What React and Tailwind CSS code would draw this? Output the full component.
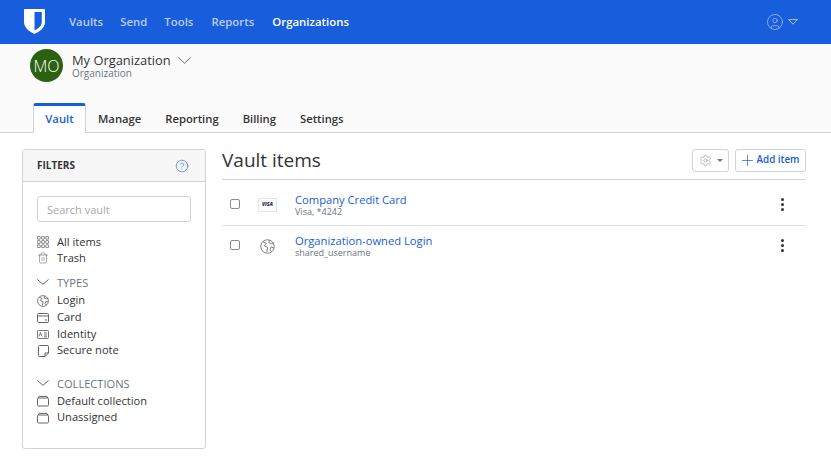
import { CircleHelp, Settings, Trash2, CircleUser } from 'lucide-react';

const Sans = '[font-family:"Open_Sans",sans-serif]';

const Chevron = ({ w = 12, h = 6 }) => (
  <svg width={w} height={h} viewBox={`0 0 ${w} ${h}`} fill="none" stroke="#555" strokeWidth="0.9">
    <path d={`M.4.4 ${w / 2} ${h - 0.7} ${w - 0.4}.4`} />
  </svg>
);

const GridIcon = () => (
  <svg width="12" height="12" viewBox="0 0 12 12" fill="none" stroke="#555" strokeWidth="0.7">
    {[0, 4.2, 8.4].map((y) =>
      [0, 4.2, 8.4].map((x) => <rect key={`${x}-${y}`} x={x + 0.4} y={y + 0.4} width="2.8" height="2.8" rx="0.5" />)
    )}
  </svg>
);

const FolderBox = () => (
  <svg width="12" height="12" viewBox="0 0 12 12" fill="none" stroke="#555" strokeWidth="0.9">
    <rect x="0.5" y="3" width="11" height="8" rx="1.2" />
    <path d="M2 1.4h8M1.2 3 2 1.4M10.8 3 10 1.4" />
  </svg>
);

const LoginGlobe = ({ size = 12, color = '#555' }) => (
  <svg width={size} height={size} viewBox="0 0 16 16" fill="none" stroke={color} strokeWidth="1">
    <circle cx="8" cy="8" r="7.2" />
    <path d="M3 3 6.8 4.6 4.6 7.4l3.6 1.4-1 5.2M10 1.2 9.4 4l3.2 1.2 2.4-1M15 9.6l-3.2-1.2-1 3.2 1.6 2" />
  </svg>
);

const CardIcon = () => (
  <svg width="12" height="10" viewBox="0 0 12 10" fill="none" stroke="#555" strokeWidth="0.9">
    <rect x="0.5" y="0.5" width="11" height="9" rx="1.2" />
    <path d="M.5 3h11M8 7h2" />
  </svg>
);

const IdIcon = () => (
  <svg width="12" height="9" viewBox="0 0 12 9" fill="none" stroke="#555" strokeWidth="0.8">
    <rect x="0.5" y="0.5" width="11" height="8" rx="0.8" />
    <path d="M2 6.5 3.5 2.5 5 6.5M7 3h3M7 5h3M7 6.8h3" />
  </svg>
);

const NoteIcon = () => (
  <svg width="11" height="12" viewBox="0 0 11 12" fill="none" stroke="#555" strokeWidth="0.9">
    <path d="M1.5.5h8a1 1 0 0 1 1 1V8L7 11.5H1.5a1 1 0 0 1-1-1v-9a1 1 0 0 1 1-1Z" />
    <path d="M7 11.5V8h3.5" />
  </svg>
);

const Row = ({ icon, label, className = 'h-[17px]' }) => (
  <div className={`flex items-center gap-[8px] text-[11.1px] text-[#333] ${className}`}>
    <span className="w-[12px] flex justify-center">{icon}</span>
    <span>{label}</span>
  </div>
);

const SectionHead = ({ label, className = '' }) => (
  <div className={`flex items-center h-[17px] gap-[8px] text-[11.1px] text-[#6d757e] ${className}`}>
    <span className="mb-[3px] flex"><Chevron /></span>
    <span>{label}</span>
  </div>
);

const Kebab = () => (
  <div className="flex flex-col gap-[2px] items-center w-[4px]">
    <span className="w-[3px] h-[3px] rounded-full bg-[#333]" />
    <span className="w-[3px] h-[3px] rounded-full bg-[#333]" />
    <span className="w-[3px] h-[3px] rounded-full bg-[#333]" />
  </div>
);

const VaultRow = ({ icon, title, sub, border }) => (
  <div className={`flex items-center ${border ? 'h-[42px] border-b border-[#dee2e6]' : 'h-[40px]'}`}>
    <span className="w-[10px] h-[10px] ml-[8px] mb-[2px] border border-[#8a8a8a] rounded-[2px] bg-white" />
    <span className="w-[39px] ml-[8px] flex justify-center">{icon}</span>
    <div className="ml-[8px] flex-1 flex flex-col">
      <span className="text-[11.2px] leading-[14px] text-[#175ddc]">{title}</span>
      <span className="text-[9px] leading-[10px] text-[#6d757e]">{sub}</span>
    </div>
    <div className={`mr-[22px] ${border ? '' : 'pb-[1px]'}`}><Kebab /></div>
  </div>
);

export default function App() {
  return (
    <div className={`w-[831px] h-[461px] overflow-hidden bg-white ${Sans}`}>
      <header className="h-[44px] bg-[#175ddc] flex items-center pl-[24px] pr-[33px]">
        <svg width="21" height="25" viewBox="0 0 21 25" className="mb-[1px]">
          <path fillRule="evenodd" fill="#fff" d="M0.6 0H20.4a.6.6 0 0 1 .6.6V13c0 6-5.6 9.8-10.5 12C5.6 22.8 0 19 0 13V.6A.6.6 0 0 1 .6 0ZM10.5 3v18.6c3.6-1.9 7.3-4.8 7.3-8.6V3Z" />
        </svg>
        <nav className="ml-[24px] flex gap-[17px] text-[11.4px] font-semibold text-[#b9cef4]">
          <span>Vaults</span>
          <span>Send</span>
          <span>Tools</span>
          <span className="ml-[1px]">Reports</span>
          <span className="ml-[1px] text-white">Organizations</span>
        </nav>
        <div className="ml-auto flex items-center gap-[4px] text-[#a9c3f2]">
          <CircleUser size={18} strokeWidth={1} />
          <svg width="10" height="6" viewBox="0 0 10 6" fill="none" stroke="currentColor" strokeWidth="1"><path d="M.6.6h8.8L5 5.2Z" /></svg>
        </div>
      </header>

      <section className="h-[89px] bg-[#fbfbfb] border-b border-[#ced4da] flex flex-col">
        <div className="flex items-center pl-[30px] pt-[5px]">
          <div className="w-[33px] h-[33px] rounded-full bg-[#2c6112] text-white text-[16px] font-light flex items-center justify-center">MO</div>
          <div className="ml-[9px] flex flex-col">
            <div className="flex items-center gap-[7px] text-[12.9px] leading-[15px] text-[#333]">
              My Organization
              <Chevron w={13} h={7} />
            </div>
            <span className="text-[10px] leading-[11px] text-[#6d757e]">Organization</span>
          </div>
        </div>
        <div className="mt-auto flex pl-[33px] text-[11.25px] font-semibold text-[#333] h-[29px] items-stretch">
          <span className="w-[53px] -mb-px flex items-center justify-center bg-white text-[#175ddc] border-x border-[#ced4da] border-t-[3px] border-t-[#175ddc] rounded-t-[3px] pb-[1px]">Vault</span>
          <span className="mx-[12px] pt-[3px] flex items-center">Manage</span>
          <span className="mx-[12px] pt-[3px] flex items-center">Reporting</span>
          <span className="mx-[12px] pt-[3px] flex items-center">Billing</span>
          <span className="ml-[12px] pt-[3px] flex items-center">Settings</span>
        </div>
      </section>

      <main className="flex pl-[22px] pr-[25px] pt-[16px] gap-[16px]">
        <aside className="w-[184px] h-[300px] shrink-0 bg-white border border-[#ced4da] rounded-[3px] flex flex-col">
          <div className="h-[32px] shrink-0 bg-[#f7f7f7] border-b border-[#ced4da] flex items-center justify-between pl-[14px] pr-[16px]">
            <span className="text-[10px] font-bold text-[#333]">FILTERS</span>
            <CircleHelp size={14} strokeWidth={1} className="text-[#175ddc]" />
          </div>
          <div className="px-[14px] pt-[14px] flex flex-col">
            <div className="h-[26px] border border-[#ced4da] rounded-[3px] flex items-center pl-[9px] pt-[3px] text-[11px] text-[#a9a9a9]">Search vault</div>
            <Row className="mt-[12px] h-[16px]" icon={<GridIcon />} label="All items" />
            <Row className="h-[16px]" icon={<Trash2 size={14} strokeWidth={1} className="text-[#555]" />} label="Trash" />
            <SectionHead className="mt-[9px]" label="TYPES" />
            <Row icon={<LoginGlobe />} label="Login" />
            <Row icon={<CardIcon />} label="Card" />
            <Row className="h-[16px]" icon={<IdIcon />} label="Identity" />
            <Row className="h-[17px]" icon={<NoteIcon />} label="Secure note" />
            <SectionHead className="mt-[17px]" label="COLLECTIONS" />
            <Row className="h-[16px]" icon={<FolderBox />} label="Default collection" />
            <Row icon={<FolderBox />} label="Unassigned" />
          </div>
        </aside>

        <div className="flex-1 flex flex-col">
          <div className="h-[31px] border-b border-[#ced4da] flex items-start justify-between">
            <h1 className="text-[19px] leading-[23px] text-[#333]">Vault items</h1>
            <div className="flex gap-[6px]">
              <div className="w-[37px] h-[23px] bg-white border border-[#ced4da] rounded-[3px] flex items-center justify-center gap-[5px] text-[#8a8a8a]">
                <Settings size={13} strokeWidth={1} />
                <span className="w-0 h-0 border-x-[3px] border-x-transparent border-t-[3px] border-t-[#777]" />
              </div>
              <div className="w-[71px] h-[23px] bg-white border border-[#ced4da] rounded-[3px] flex items-center justify-center gap-[4px] pb-[1px] text-[9.8px] font-semibold text-[#175ddc]">
                <svg width="11" height="11" viewBox="0 0 11 11" fill="none" stroke="#175ddc" strokeWidth="0.7"><path d="M5.5 0v11M0 5.5h11" /></svg>
                Add item
              </div>
            </div>
          </div>
          <div className="mt-[4px]">
            <VaultRow
              border
              icon={<span className="w-[19px] h-[14px] border border-[#e5e5e5] bg-white flex items-center justify-center text-[5px] font-extrabold italic text-[#1a2a6c]">VISA</span>}
              title="Company Credit Card"
              sub="Visa, *4242"
            />
            <VaultRow
              icon={<LoginGlobe size={15} color="#777" />}
              title="Organization-owned Login"
              sub="shared_username"
            />
          </div>
        </div>
      </main>
    </div>
  );
}
